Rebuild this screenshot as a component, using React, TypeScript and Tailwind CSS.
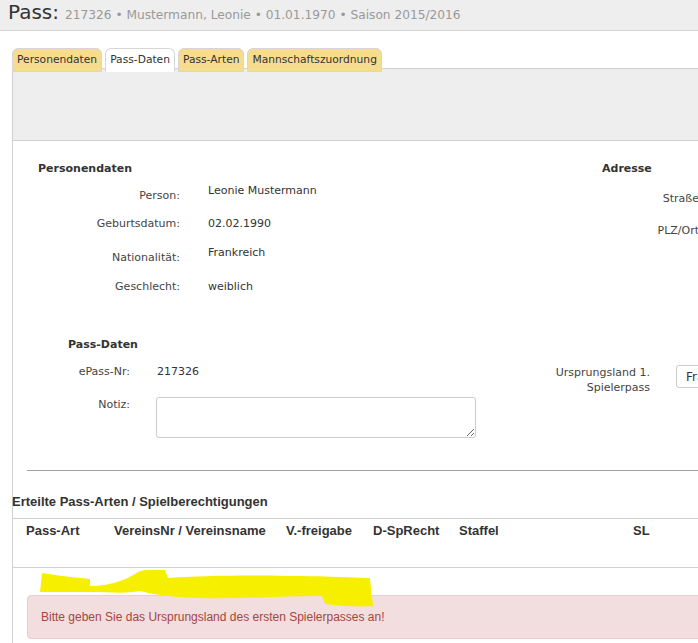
import React from "react";

const verdana = { fontFamily: '"DejaVu Sans", Verdana, sans-serif' };
const narrow = { fontFamily: '"Liberation Sans Narrow", "Arial Narrow", "Liberation Sans", sans-serif' };

function Tab({ label, active }: { label: string; active?: boolean }) {
  return (
    <div
      className={
        "h-[24px] px-[4px] flex items-center rounded-t-[6px] border border-[#d6d6d6] text-[10.7px] text-[#333] " +
        (active ? "bg-white border-b-white relative z-10" : "bg-[#f7dc8e]")
      }
    >
      {label}
    </div>
  );
}

export default function App() {
  return (
    <div className="w-[698px] h-[643px] overflow-hidden bg-white relative" style={verdana}>
      {/* header */}
      <div className="h-[31px] bg-[#eeeeee] border-b border-[#d4d4d4] flex items-baseline pl-[8px] whitespace-nowrap">
        <span className="text-[20px] leading-[24px] text-[#333]">Pass:</span>
        <span className="text-[12.2px] text-[#999] ml-[6px]">217326 • Mustermann, Leonie • 01.01.1970 • Saison 2015/2016</span>
      </div>

      <div className="pl-[12px] pt-[17px] w-[760px]">
        {/* tabs */}
        <div className="flex items-end gap-[3px] relative z-10">
          <Tab label="Personendaten" />
          <Tab label="Pass-Daten" active />
          <Tab label="Pass-Arten" />
          <Tab label="Mannschaftszuordnung" />
        </div>
        {/* panel */}
        <div className="-mt-[4px] border-l border-t border-[#d0d0d0] h-[600px] text-[11px] leading-[16px] text-[#333]">
          <div className="h-[72px] bg-[#eeeeee] border-b border-[#d0d0d0]" />

          {/* Personendaten + Adresse */}
          <div className="flex h-[179px]">
            <div className="w-[560px] pl-[25px]">
              <div className="pt-[20px] font-bold">Personendaten</div>
              <div className="flex h-[33px]">
                <div className="w-[142px] text-right pt-[11px] text-[#444]">Person:</div>
                <div className="ml-[28px] pt-[6px]">Leonie Mustermann</div>
              </div>
              <div className="flex h-[30px]">
                <div className="w-[142px] text-right pt-[6px] text-[#444]">Geburtsdatum:</div>
                <div className="ml-[28px] pt-[6px]">02.02.1990</div>
              </div>
              <div className="flex h-[30px]">
                <div className="w-[142px] text-right pt-[10px] text-[#444]">Nationalität:</div>
                <div className="ml-[28px] pt-[5px]">Frankreich</div>
              </div>
              <div className="flex h-[30px]">
                <div className="w-[142px] text-right pt-[9px] text-[#444]">Geschlecht:</div>
                <div className="ml-[28px] pt-[9px]">weiblich</div>
              </div>
            </div>
            <div className="w-[126px]">
              <div className="pt-[20px] pl-[29px] font-bold">Adresse</div>
              <div className="text-right mt-[14px] text-[#444]">Straße</div>
              <div className="text-right mt-[16px] text-[#444]">PLZ/Ort</div>
            </div>
          </div>

          {/* Pass-Daten */}
          <div className="flex h-[150px]">
            <div className="w-[480px]">
              <div className="pl-[55px] pt-[17px] font-bold">Pass-Daten</div>
              <div className="flex mt-[11px]">
                <div className="w-[117px] text-right text-[#444]">ePass-Nr:</div>
                <div className="ml-[27px]">217326</div>
              </div>
              <div className="flex items-start mt-[17px]">
                <div className="w-[117px] text-right text-[#444]">Notiz:</div>
                <textarea className="block ml-[26px] w-[320px] h-[41px] border border-[#cccccc] rounded-[3px] resize-y outline-none" />
              </div>
            </div>
            <div className="flex items-start">
              <div className="w-[157px] text-right leading-[15px] text-[#444] mt-[45px]">
                Ursprungsland 1.<br />Spielerpass
              </div>
              <div className="ml-[26px] mt-[45px] h-[23px] w-[60px] border border-[#cccccc] rounded-l-[3px] text-[12px] text-[#333] pl-[9px] flex items-center overflow-hidden whitespace-nowrap">
                Frankreich
              </div>
            </div>
          </div>

          {/* hr */}
          <div className="ml-[14px] border-t border-[#a0a0a0]" />

          {/* Erteilte Pass-Arten */}
          <div className="mt-[22px] -ml-[1px] text-[13px] leading-[18px] font-bold text-[#333]" style={narrow}>
            Erteilte Pass-Arten / Spielberechtigungen
          </div>
          <div className="mt-[7px] border-t border-b border-[#d0d0d0] h-[50px] text-[13px] leading-[18px] font-bold text-[#333]" style={narrow}>
            <div className="flex pt-[3px]">
              <div className="pl-[13px] w-[101px]">Pass-Art</div>
              <div className="w-[172px]">VereinsNr / Vereinsname</div>
              <div className="w-[87px]">V.-freigabe</div>
              <div className="w-[86px]">D-SpRecht</div>
              <div className="w-[174px]">Staffel</div>
              <div>SL</div>
            </div>
          </div>

          {/* alert */}
          <div
            className="ml-[14px] mt-[27px] h-[44px] w-[700px] bg-[#f2dede] border border-[#ebccd1] rounded-[4px] text-[12px] text-[#a94442] pl-[13px] flex items-center"
            style={narrow}
          >
            Bitte geben Sie das Ursprungsland des ersten Spielerpasses an!
          </div>
        </div>
      </div>

      {/* yellow scribble overlay */}
      <svg className="absolute left-0 top-0 pointer-events-none" width="698" height="643" viewBox="0 0 698 643">
        <path
          d="M42 573 C60 576 80 578 90 579 L90 586 C110 586 125 580 135 574 C140 570 145 570 150 570 L165 570 L168 578 C200 576 240 575 290 576 C320 576 340 577 370 578 L372 600 L374 606 C360 607 340 606 325 604 L322 596 C290 596 240 599 200 598 C170 597 150 594 140 591 C125 594 110 592 90 592 C70 592 50 592 40 592 Z"
          fill="#f6f000"
        />
      </svg>
    </div>
  );
}
